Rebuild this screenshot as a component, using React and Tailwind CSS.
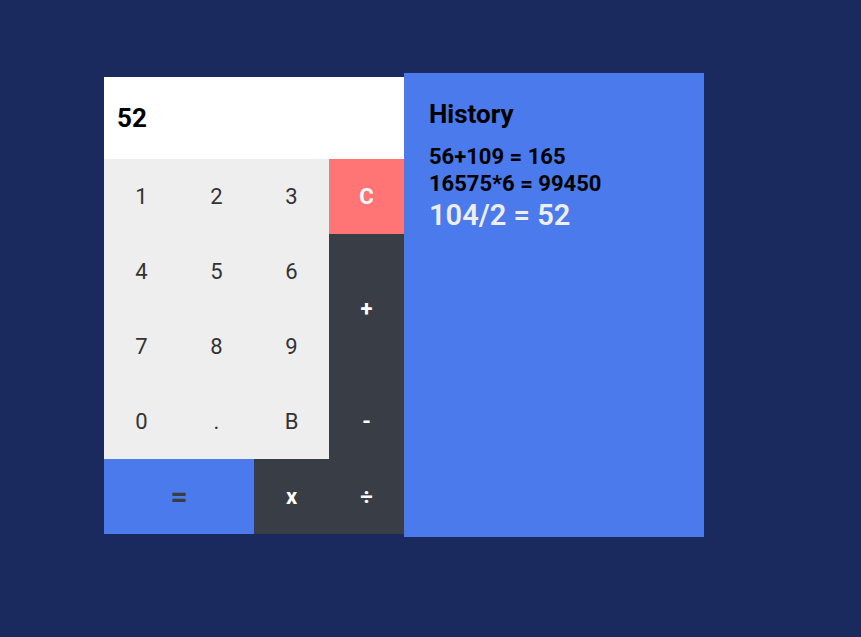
export default function App() {
    const history = ["56+109 = 165", "16575*6 = 99450"]
    const last = "104/2 = 52"
    const light = "flex items-center justify-center bg-[#eeeeee] text-[#333333] text-[22px]"
    const dark = "flex items-center justify-center bg-[#393d45] text-white text-[22px] font-bold"
    return <div className="min-h-[637px] w-full bg-[#1a2a5f] flex items-start pl-[104px] pt-[73px]"
        style={{ fontFamily: "Roboto, 'Noto Sans', sans-serif" }}>
        <div className="flex items-center">
            {/* calculator */}
            <div className="w-[300px] flex flex-col">
                <div className="h-[82px] bg-white flex items-center px-[13px] pt-[2px] text-[26px] font-bold text-black">
                    52
                </div>
                <div className="grid grid-cols-[75px_75px_75px_75px] grid-rows-[75px_75px_75px_75px_75px]">
                    <div className={light}>1</div>
                    <div className={light}>2</div>
                    <div className={light}>3</div>
                    <div className="flex items-center justify-center bg-[#ff7474] text-white text-[22px] font-bold">C</div>
                    <div className={light}>4</div>
                    <div className={light}>5</div>
                    <div className={light}>6</div>
                    <div className={dark + " row-span-2"}>+</div>
                    <div className={light}>7</div>
                    <div className={light}>8</div>
                    <div className={light}>9</div>
                    <div className={light}>0</div>
                    <div className={light}>.</div>
                    <div className={light}>B</div>
                    <div className={dark}>-</div>
                    <div className="col-span-2 flex items-center justify-center bg-[#4a7aeb] text-[#393d45] text-[30px] font-bold">=</div>
                    <div className={dark}>x</div>
                    <div className={dark}>÷</div>
                </div>
            </div>
            {/* history */}
            <div className="w-[300px] h-[464px] bg-[#4a7aeb] px-[25px] pt-[25px]">
                <h2 className="text-[26px] font-bold text-black leading-[32px]">History</h2>
                <div className="mt-[13px] flex flex-col">
                    {history.map(h => (
                        <span key={h} className="text-[22px] font-bold text-black leading-[27px]">{h}</span>
                    ))}
                    <span className="text-[29px] font-semibold text-[#eeeeee] leading-[36px]">{last}</span>
                </div>
            </div>
        </div>
    </div>
}
